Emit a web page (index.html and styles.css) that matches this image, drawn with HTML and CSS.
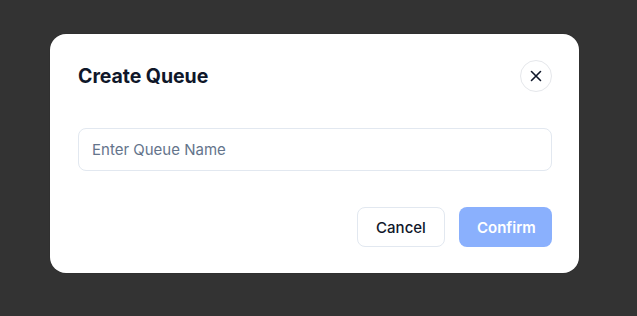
FILE: index.html
```html
<!DOCTYPE html>
<html>
<head>
<meta charset="utf-8">
<link rel="stylesheet" href="styles.css">
</head>
<body>
<div class="backdrop">
  <div class="dialog">
    <div class="header">
      <h2 class="title">Create Queue</h2>
      <button class="close" aria-label="Close">
        <svg width="14" height="14" viewBox="0 0 14 14" fill="none" stroke="#0f172a" stroke-width="1.6" stroke-linecap="round"><path d="M2.5 2.5l9 9M11.5 2.5l-9 9"/></svg>
      </button>
    </div>
    <input class="field" type="text" placeholder="Enter Queue Name">
    <div class="actions">
      <button class="btn cancel">Cancel</button>
      <button class="btn confirm">Confirm</button>
    </div>
  </div>
</div>
</body>
</html>
```
FILE: styles.css
```css
* { box-sizing: border-box; }
html, body { margin: 0; height: 100%; }
body {
  background: #333333;
  font-family: Inter, "Noto Sans", sans-serif;
}
.backdrop {
  padding: 34px 0 0 50px;
}
.dialog {
  width: 529px;
  height: 239px;
  background: #ffffff;
  border-radius: 16px;
  padding: 26px 27px 26px 28px;
  display: flex;
  flex-direction: column;
  box-shadow: 0 0 0 1px rgba(0,0,0,0.05);
}
.header {
  display: flex;
  align-items: center;
  justify-content: space-between;
  height: 32px;
}
.title {
  margin: 0;
  font-size: 19.5px;
  font-weight: 700;
  color: #0f172a;
  letter-spacing: -0.05px;
}
.close {
  width: 32px;
  height: 32px;
  border-radius: 50%;
  border: 1px solid #e5e7eb;
  background: #fff;
  display: flex;
  align-items: center;
  justify-content: center;
  padding: 0;
}
.field {
  margin-top: 36px;
  height: 44px;
  width: 100%;
  border: 1px solid #e2e8f0;
  border-radius: 8px;
  padding: 0 13px;
  font-family: Inter, "Noto Sans", sans-serif;
  font-size: 15px;
  color: #0f172a;
  outline: none;
}
.field::placeholder { color: #64748b; }
.actions {
  margin-top: 36px;
  display: flex;
  justify-content: flex-end;
  gap: 14px;
}
.btn {
  height: 40px;
  border-radius: 8px;
  font-family: Inter, "Noto Sans", sans-serif;
  font-size: 15px;
  padding: 0 18px;
}
.cancel {
  background: #fff;
  border: 1px solid #e2e8f0;
  color: #0f172a;
  font-weight: 500;
  width: 88px;
}
.confirm {
  background: #8ab0fd;
  border: none;
  color: #ffffff;
  font-weight: 600;
  width: 93px;
}
```
